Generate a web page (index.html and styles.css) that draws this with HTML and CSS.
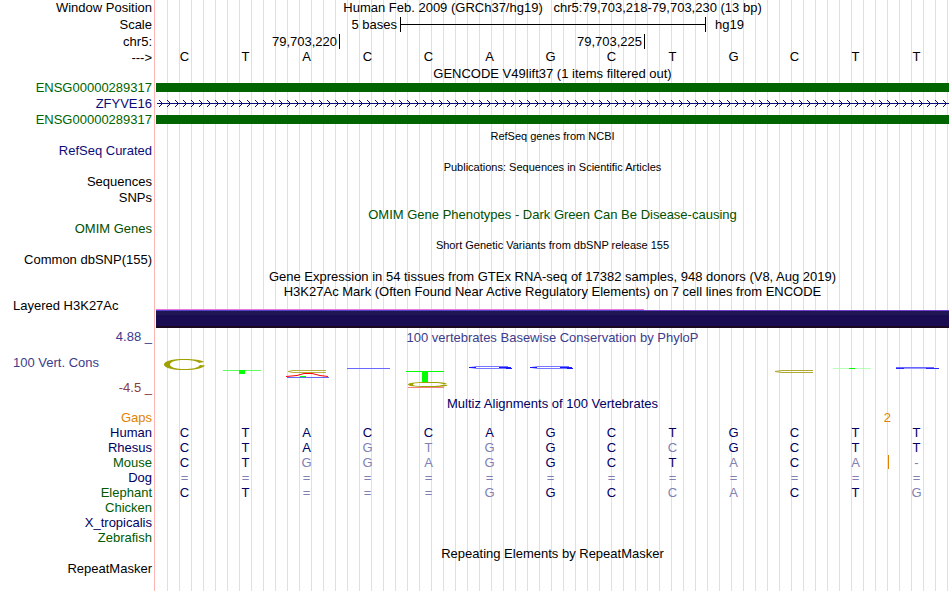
FILE: index.html
```html
<!DOCTYPE html>
<html lang="en">
<head>
<meta charset="utf-8">
<title>Genome Browser chr5:79,703,218-79,703,230</title>
<link rel="stylesheet" href="styles.css">
</head>
<body>
<main class="browser">
  <div class="row"><div class="label">Window Position</div><div class="track title">Human Feb. 2009 (GRCh37/hg19) &nbsp; chr5:79,703,218-79,703,230 (13 bp)</div></div>
  <div class="row ruler-row"><div class="label">Scale</div><div class="track scale"><span class="scale-size">5 bases</span><span class="ruler"></span><span class="scale-db">hg19</span></div></div>
  <div class="row"><div class="label">chr5:</div><div class="track ticks"><span class="tick">79,703,220</span><span class="tick">79,703,225</span></div></div>
  <div class="row"><div class="label">---&gt;</div><div class="track bases"><span>C</span><span>T</span><span>A</span><span>C</span><span>C</span><span>A</span><span>G</span><span>C</span><span>T</span><span>G</span><span>C</span><span>T</span><span>T</span></div></div>
  <div class="row tight"><div class="label"></div><div class="track title">GENCODE V49lift37 (1 items filtered out)</div></div>
  <div class="row"><div class="label green">ENSG00000289317</div><div class="track gene"><div class="exon"></div></div></div>
  <div class="row"><div class="label blue">ZFYVE16</div><div class="track gene">
    <svg class="intron" height="9" aria-hidden="true">
      <defs><pattern id="chevron" width="8" height="9" patternUnits="userSpaceOnUse"><path d="M3 1h1v1h-1zM4 2h1v1h-1zM5 3h1v1h-1zM5 5h1v1h-1zM4 6h1v1h-1zM3 7h1v1h-1z"/></pattern></defs>
      <rect x="1" y="4" width="100%" height="1"/><rect class="arrows" width="100%" height="9"/>
    </svg></div></div>
  <div class="row"><div class="label green">ENSG00000289317</div><div class="track gene"><div class="exon"></div></div></div>
  <div class="row short"><div class="label"></div><div class="track title small">RefSeq genes from NCBI</div></div>
  <div class="row"><div class="label blue">RefSeq Curated</div><div class="track"></div></div>
  <div class="row short"><div class="label"></div><div class="track title small">Publications: Sequences in Scientific Articles</div></div>
  <div class="row"><div class="label">Sequences</div><div class="track"></div></div>
  <div class="row tall"><div class="label">SNPs</div><div class="track"></div></div>
  <div class="row tight"><div class="label"></div><div class="track title omim">OMIM Gene Phenotypes - Dark Green Can Be Disease-causing</div></div>
  <div class="row"><div class="label omim">OMIM Genes</div><div class="track"></div></div>
  <div class="row short"><div class="label"></div><div class="track title small">Short Genetic Variants from dbSNP release 155</div></div>
  <div class="row tall"><div class="label">Common dbSNP(155)</div><div class="track"></div></div>
  <div class="row short"><div class="label"></div><div class="track title">Gene Expression in 54 tissues from GTEx RNA-seq of 17382 samples, 948 donors (V8, Aug 2019)</div></div>
  <div class="row tight"><div class="label"></div><div class="track title">H3K27Ac Mark (Often Found Near Active Regulatory Elements) on 7 cell lines from ENCODE</div></div>
  <div class="row histone"><div class="label left">Layered H3K27Ac</div><div class="track">
    <svg class="signal" viewBox="0 0 793 19" height="19" preserveAspectRatio="none" aria-hidden="true">
      <rect y="1" width="793" height="1" fill="#7040cf"/>
      <rect width="488" height="1" fill="#e878d8"/><rect y="1" width="488" height="1" fill="#5440c8"/>
      <rect y="2" width="793" height="4" fill="#1f1654"/><rect y="6" width="793" height="11" fill="#190c50"/><rect y="17" width="793" height="2" fill="#180820"/>
    </svg></div></div>
  <div class="row conservation"><div class="label limits"><span class="phylop">4.88 _</span><span class="phylop left">100 Vert. Cons</span><span class="low">-4.5 _</span></div><div class="track plot">
    <div class="title phylop">100 vertebrates Basewise Conservation by PhyloP</div>
    <svg class="logo" viewBox="0 0 793 40" height="40" preserveAspectRatio="none" aria-hidden="true">
      <path fill="#a0a000" fill-rule="evenodd" d="M48 6C46 4 38 3 29 3C16 3 8 5 8 8.500C8 12 16 14 29 14C40 14 47 12 49 9.500L44 9C42 12 36 13 29 13C19 13 14 11 14 8.500C14 6 19 4 29 4C36 4 41 5 43 7Z"/>
      <path fill="#60ff60" d="M67 14h38v1h-38z"/><path fill="#0f0" d="M83 14h6v4h-6z"/>
      <path fill="none" stroke="#b8b040" d="M170 14.500H137L132 15.500L137 16.500H170"/>
      <path fill="none" stroke="#f00" d="M130 20.500L141 19.500L148 17.500L156 17.500L164 19.500L172 20.500"/>
      <path fill="#0f0" d="M144 20h6v1h-6z"/><path fill="#6868f8" d="M131 21h42v1h-42z"/>
      <path fill="#6868ff" d="M191 12h43v1h-43z"/>
      <path fill="#0f0" d="M250 15h38v1h-38zM266 16h6v10h-6z"/>
      <path fill="#a0a000" fill-rule="evenodd" d="M291 28C288 26 282 26 271 26C258 26 252 27 252 28.500C252 30 258 31 271 31C282 31 289 31 292 29L288 28.500C284 30 279 30 271 30C261 30 257 30 257 28.500C257 27 261 27 271 27C280 27 285 27 287 28Z"/>
      <path fill="#f58080" d="M252 31h36v1h-36z"/>
      <g fill="none" stroke="#7878ff"><path d="M352 10.500H321L314 11.500L321 12.500H355"/><path d="M413 10.500H382L375 11.500L382 12.500H416"/></g>
      <path fill="#1818ff" d="M313 11h7v1h-7zM343 11h12v1h-12zM350 12h6v1h-6zM374 11h7v1h-7zM404 11h12v1h-12zM411 12h6v1h-6z"/>
      <path fill="none" stroke="#b0a830" d="M657 14.500H626L619 15.500L626 16.500H657"/>
      <path fill="#b8ffb8" d="M677 12h38v1h-38z"/><path fill="#0f0" d="M693 12h6v1h-6z"/>
      <path fill="#6868ff" d="M740 11h38v1h-38z"/><path fill="#2828ff" d="M740 12h8v1h-8zM770 12h13v1h-13z"/><path fill="#9898ff" d="M748 12h22v1h-22z"/>
    </svg></div></div>
  <div class="row tight"><div class="label"></div><div class="track title navy">Multiz Alignments of 100 Vertebrates</div></div>
  <table class="alignment">
    <tbody>
    <tr class="gaps"><th scope="row">Gaps</th><td></td><td></td><td></td><td></td><td></td><td></td><td></td><td></td><td></td><td></td><td></td><td><span class="insert">2</span></td><td></td></tr>
    <tr><th scope="row">Human</th><td>C</td><td>T</td><td>A</td><td>C</td><td>C</td><td>A</td><td>G</td><td>C</td><td>T</td><td>G</td><td>C</td><td>T</td><td>T</td></tr>
    <tr><th scope="row">Rhesus</th><td>C</td><td>T</td><td>A</td><td class="diff">G</td><td class="diff">T</td><td class="diff">G</td><td>G</td><td>C</td><td class="diff">C</td><td>G</td><td>C</td><td>T</td><td>T</td></tr>
    <tr><th scope="row" class="forest">Mouse</th><td>C</td><td>T</td><td class="diff">G</td><td class="diff">G</td><td class="diff">A</td><td class="diff">G</td><td>G</td><td>C</td><td>T</td><td class="diff">A</td><td>C</td><td class="diff">A<span class="insert bar"></span></td><td class="diff">-</td></tr>
    <tr class="unaligned"><th scope="row">Dog</th><td>=</td><td>=</td><td>=</td><td>=</td><td>=</td><td>=</td><td>=</td><td>=</td><td>=</td><td>=</td><td>=</td><td>=</td><td>=</td></tr>
    <tr><th scope="row" class="forest">Elephant</th><td>C</td><td>T</td><td class="diff">=</td><td class="diff">=</td><td class="diff">=</td><td class="diff">G</td><td>G</td><td>C</td><td class="diff">C</td><td class="diff">A</td><td>C</td><td>T</td><td class="diff">G</td></tr>
    <tr><th scope="row" class="forest">Chicken</th><td colspan="13"></td></tr>
    <tr><th scope="row">X_tropicalis</th><td colspan="13"></td></tr>
    <tr><th scope="row" class="forest">Zebrafish</th><td colspan="13"></td></tr>
    </tbody>
  </table>
  <div class="row short"><div class="label"></div><div class="track title">Repeating Elements by RepeatMasker</div></div>
  <div class="row last"><div class="label">RepeatMasker</div><div class="track"></div></div>
</main>
</body>
</html>
```
FILE: styles.css
```css
* { box-sizing: border-box; }

body {
  margin: 0;
  background: #fff;
  color: #000;
  font: 13px/15px "Liberation Sans", Arial, sans-serif;
}

/* Gutter line and vertical guides run behind every track. */
.browser {
  display: flex;
  flex-direction: column;
  min-height: 100vh;
  padding-right: 1px;
  background:
    linear-gradient(#fff, #fff) 0 0 / 154px 100% no-repeat,
    linear-gradient(#ffb4b4, #ffb4b4) 154px 0 / 1px 100% no-repeat,
    linear-gradient(#fff, #fff) 155px 0 / 11px 100% no-repeat,
    linear-gradient(to right, #dcdcff 1px, transparent 1px) 167px 0 / 12px 100%;
}

.row {
  display: grid;
  grid-template-columns: 154px minmax(0, 1fr);
  height: 16px;
  line-height: 15px;
}
.row.tall { height: 17px; }
.row.short { height: 15px; }
.row.tight { height: 14px; }
.row.ruler-row { height: 18px; line-height: 17px; }
.row.last { flex: 1; }

.label { padding-right: 2px; text-align: right; white-space: nowrap; }
.track { padding-left: 2px; white-space: nowrap; }
.title { text-align: center; }
.small { font-size: 11px; line-height: 16px; }
.left { padding-left: 13px; text-align: left; }

.green { color: #006400; }
.blue { color: #0c0c78; }
.omim { color: #005000; }
.navy { color: #000064; }
.phylop { color: #3c3c8c; }
.low { color: #8c3c3c; }

.scale { display: grid; grid-template-columns: 4fr 5fr 4fr; }
.scale-size { padding-right: 3px; text-align: right; }
.scale-db { padding-left: 10px; }
.ruler {
  height: 15px;
  margin-top: 1px;
  margin-right: -1px;
  border: solid #000;
  border-width: 0 1px;
  background: linear-gradient(#000, #000) 0 7px / 100% 1px no-repeat;
}

.ticks { display: grid; grid-template-columns: 3fr 5fr 5fr; }
.tick {
  height: 15px;
  margin-right: -1px;
  padding-right: 2px;
  border-right: 1px solid #000;
  text-align: right;
}

.bases {
  display: grid;
  grid-template-columns: repeat(13, 1fr);
  padding: 0 2px 0 0;
  line-height: 14px;
  text-align: center;
}

.gene { padding-top: 3px; }
.exon { height: 9px; background: #006400; }
.intron { display: block; width: 100%; fill: #0c0c78; }
.arrows { fill: url(#chevron); }

.row.histone { height: 30px; }
.signal { display: block; width: 100%; margin-top: 11px; }

.row.conservation { height: 68px; line-height: 17px; }
.limits { display: flex; flex-direction: column; justify-content: space-between; }
.plot { padding-top: 1px; }
.logo { display: block; width: 100%; margin-top: 10px; }

.alignment {
  width: 100%;
  margin-bottom: 1px;
  padding-right: 2px;
  border-spacing: 0;
  table-layout: fixed;
  color: #000064;
}
.alignment th {
  width: 154px;
  height: 15px;
  padding: 0 2px 0 0;
  font-weight: normal;
  text-align: right;
}
.alignment td { position: relative; padding: 0; text-align: center; }
.alignment .forest { color: #005a00; }
.alignment .diff, .unaligned td { color: #8080b4; }
.alignment .gaps { color: #e08200; }
.unaligned td { padding-top: 1px; line-height: 14px; }
.insert { position: absolute; top: 0; right: -5px; color: #e08200; }
.insert.bar { right: -3px; width: 1px; height: 14px; background: #e08200; }
```
